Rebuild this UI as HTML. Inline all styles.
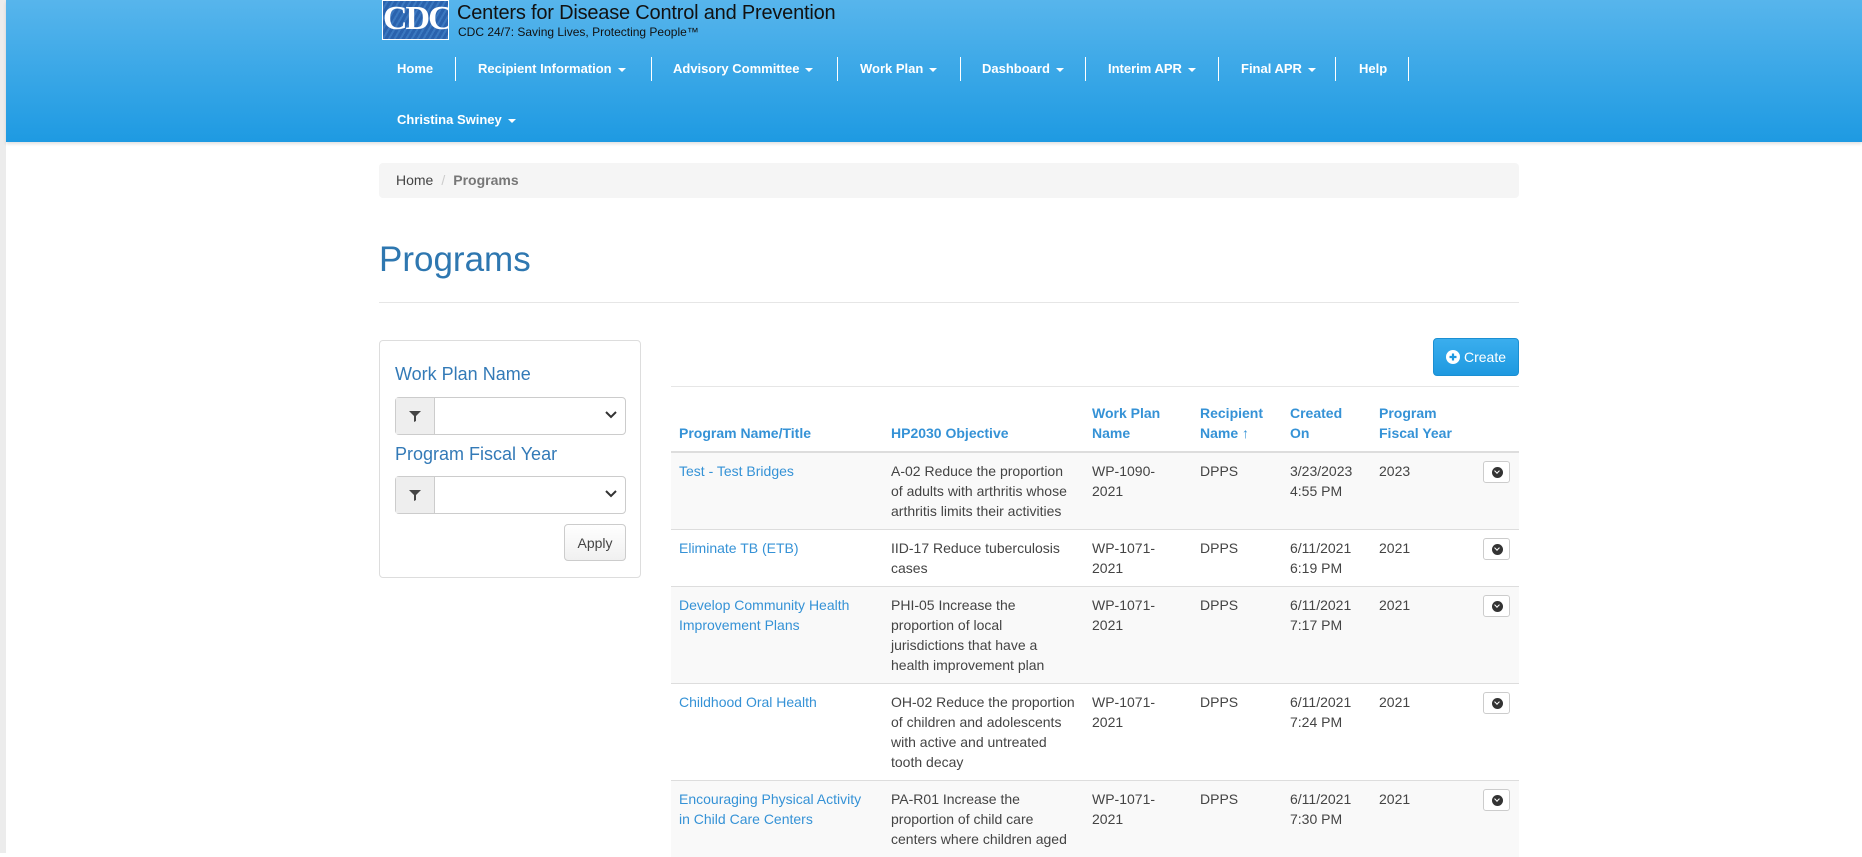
<!DOCTYPE html>
<html><head><meta charset="utf-8"><style>
*{box-sizing:border-box}
body{margin:0;width:1862px;height:853px;overflow:hidden;background:#fff;font-family:"Liberation Sans",Arial,sans-serif;font-size:14px;color:#444;position:relative}
.frame{position:absolute;left:0;top:0;width:6px;height:853px;background:#ececec}
.hdr{position:absolute;left:6px;top:0;right:0;height:142px;background:linear-gradient(#57b5ec,#1e9ae2);box-shadow:0 2px 3px rgba(0,0,0,.12)}
.logo{position:absolute;left:382px;top:0;width:67px;height:40px;background:repeating-linear-gradient(120deg,#2a62ad 0 3px,#3b78c0 3px 5px);border:1px solid #fff;color:#fff;font-family:"Liberation Serif",serif;font-weight:bold;font-size:34px;line-height:36px;text-align:center;letter-spacing:-2px;overflow:hidden}
.t1{position:absolute;left:457px;top:2px;font-size:20px;color:#111;letter-spacing:-0.2px}
.t2{position:absolute;left:458px;top:25px;font-size:12px;color:#111}
.nav{position:absolute;color:#fff;font-weight:bold;font-size:13px}
.sep{position:absolute;top:57px;width:1px;height:24px;background:#fff}
.car{display:inline-block;width:0;height:0;border-left:4px solid transparent;border-right:4px solid transparent;border-top:4px solid #fff;vertical-align:middle;margin-left:6px}
.bc{position:absolute;left:379px;top:163px;width:1140px;height:35px;background:#f5f5f5;border-radius:4px;padding:9px 17px;font-size:14px}
h1{position:absolute;left:379px;top:240px;margin:0;font-weight:normal;font-size:35px;color:#2e77b0}
.hr{position:absolute;left:379px;top:302px;width:1140px;height:1px;background:#e6e6e6}
.panel{position:absolute;left:379px;top:340px;width:262px;height:238px;border:1px solid #ddd;border-radius:4px}
.lbl{position:absolute;left:15px;color:#337ab7;font-size:18px}
.ig{position:absolute;left:15px;width:231px;height:38px;border:1px solid #ccc;border-radius:4px;display:flex}
.ig .ad{width:39px;background:#eee;border-right:1px solid #ccc;display:flex;align-items:center;justify-content:center}
.ig .sel{flex:1;position:relative}
.btn{position:absolute;border:1px solid #ccc;border-radius:4px;background:linear-gradient(#fff,#f0f0f0)}
.create{position:absolute;left:1433px;top:338px;width:86px;height:38px;border-radius:4px;background:linear-gradient(#3aaeee,#1e99e0);border:1px solid #1b8fd2;color:#fff;font-size:14px;display:flex;align-items:center;justify-content:center}
.tline{position:absolute;left:671px;top:386px;width:848px;height:1px;background:#e6e6e6}
table{position:absolute;left:671px;top:399px;width:848px;border-collapse:collapse;table-layout:fixed}
th{color:#3592d6;font-weight:bold;text-align:left;vertical-align:bottom;padding:4px 8px 8px;line-height:20px;border-bottom:2px solid #ddd}
td{vertical-align:top;padding:8px;line-height:20px;border-top:1px solid #ddd}
tr.s td{background:#f9f9f9}
td.n{color:#3592d6}
.dd{display:inline-block;width:27px;height:22px;border:1px solid #ccc;border-radius:3px;background:#fff;position:relative}
.dd i{position:absolute;left:8px;top:5px;width:11px;height:11px;border-radius:50%;background:#333}
.dd i:after{content:"";position:absolute;left:3px;top:2px;width:3px;height:3px;border-right:1.5px solid #fff;border-bottom:1.5px solid #fff;transform:rotate(45deg)}
</style></head><body>
<div class="frame"></div>
<div class="hdr"></div>
<div class="logo">CDC</div>
<div class="t1">Centers for Disease Control and Prevention</div>
<div class="t2">CDC 24/7: Saving Lives, Protecting People™</div>
<div class="nav" style="left:397px;top:61px">Home</div>
<div class="sep" style="left:455px"></div>
<div class="nav" style="left:478px;top:61px">Recipient Information<span class="car"></span></div>
<div class="sep" style="left:651px"></div>
<div class="nav" style="left:673px;top:61px">Advisory Committee<span class="car"></span></div>
<div class="sep" style="left:837px"></div>
<div class="nav" style="left:860px;top:61px">Work Plan<span class="car"></span></div>
<div class="sep" style="left:960px"></div>
<div class="nav" style="left:982px;top:61px">Dashboard<span class="car"></span></div>
<div class="sep" style="left:1085px"></div>
<div class="nav" style="left:1108px;top:61px">Interim APR<span class="car"></span></div>
<div class="sep" style="left:1218px"></div>
<div class="nav" style="left:1241px;top:61px">Final APR<span class="car"></span></div>
<div class="sep" style="left:1335px"></div>
<div class="nav" style="left:1359px;top:61px">Help</div>
<div class="sep" style="left:1408px"></div>
<div class="nav" style="left:397px;top:112px">Christina Swiney<span class="car"></span></div>

<div class="bc"><span>Home</span><span style="color:#ccc;padding:0 8px">/</span><span style="color:#777;font-weight:bold">Programs</span></div>
<h1>Programs</h1>
<div class="hr"></div>

<div class="panel">
 <div class="lbl" style="top:23px">Work Plan Name</div>
 <div class="ig" style="top:56px"><div class="ad"><svg width="14" height="14" viewBox="0 0 14 14"><path d="M1 2h12l-5 5v5l-2 1V7z" fill="#444"/></svg></div><div class="sel"><svg style="position:absolute;right:8px;top:13px" width="12" height="8" viewBox="0 0 12 8"><path d="M1 1l5 5 5-5" stroke="#333" stroke-width="2" fill="none"/></svg></div></div>
 <div class="lbl" style="top:103px">Program Fiscal Year</div>
 <div class="ig" style="top:135px"><div class="ad"><svg width="14" height="14" viewBox="0 0 14 14"><path d="M1 2h12l-5 5v5l-2 1V7z" fill="#444"/></svg></div><div class="sel"><svg style="position:absolute;right:8px;top:13px" width="12" height="8" viewBox="0 0 12 8"><path d="M1 1l5 5 5-5" stroke="#333" stroke-width="2" fill="none"/></svg></div></div>
 <div class="btn" style="left:184px;top:183px;width:62px;height:37px;display:flex;align-items:center;justify-content:center">Apply</div>
</div>

<div class="create"><svg width="14" height="14" viewBox="0 0 14 14" style="margin-right:4px"><circle cx="7" cy="7" r="7" fill="#fff"/><path d="M7 3.5v7M3.5 7h7" stroke="#1e99e0" stroke-width="2.2"/></svg>Create</div>
<div class="tline"></div>
<table>
<colgroup><col style="width:212px"><col style="width:201px"><col style="width:108px"><col style="width:90px"><col style="width:89px"><col style="width:104px"><col style="width:44px"></colgroup>
<tr><th>Program Name/Title</th><th>HP2030 Objective</th><th>Work Plan Name</th><th>Recipient Name ↑</th><th>Created On</th><th>Program Fiscal Year</th><th></th></tr>
<tr class="s"><td class="n">Test - Test Bridges</td><td>A-02 Reduce the proportion of adults with arthritis whose arthritis limits their activities</td><td>WP-1090-2021</td><td>DPPS</td><td>3/23/2023 4:55 PM</td><td>2023</td><td><span class="dd"><i></i></span></td></tr>
<tr><td class="n">Eliminate TB (ETB)</td><td>IID-17 Reduce tuberculosis cases</td><td>WP-1071-2021</td><td>DPPS</td><td>6/11/2021 6:19 PM</td><td>2021</td><td><span class="dd"><i></i></span></td></tr>
<tr class="s"><td class="n">Develop Community Health Improvement Plans</td><td>PHI-05 Increase the proportion of local jurisdictions that have a health improvement plan</td><td>WP-1071-2021</td><td>DPPS</td><td>6/11/2021 7:17 PM</td><td>2021</td><td><span class="dd"><i></i></span></td></tr>
<tr><td class="n">Childhood Oral Health</td><td>OH-02 Reduce the proportion of children and adolescents with active and untreated tooth decay</td><td>WP-1071-2021</td><td>DPPS</td><td>6/11/2021 7:24 PM</td><td>2021</td><td><span class="dd"><i></i></span></td></tr>
<tr class="s"><td class="n">Encouraging Physical Activity in Child Care Centers</td><td>PA-R01 Increase the proportion of child care centers where children aged</td><td>WP-1071-2021</td><td>DPPS</td><td>6/11/2021 7:30 PM</td><td>2021</td><td><span class="dd"><i></i></span></td></tr>
</table>
</body></html>
